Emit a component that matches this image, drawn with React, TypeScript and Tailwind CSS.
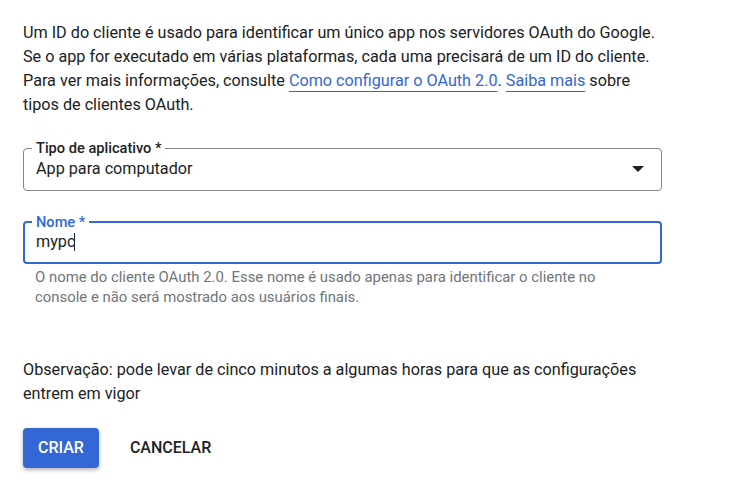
const FONT = { fontFamily: "Roboto, 'Noto Sans', Arial, sans-serif" };

function Link({ children }: { children: React.ReactNode }) {
  return (
    <a
      href="#"
      className="text-[#3367d6] underline decoration-[#3367d6] underline-offset-[5px]"
    >
      {children}
    </a>
  );
}

export default function App() {
  return (
    <div className="min-h-screen bg-white text-[#202124]" style={FONT}>
      <div className="w-[639px] ml-[23px] pt-[21px]">
        <p className="text-[16.2px] leading-6">
          Um ID do cliente é usado para identificar um único app nos servidores OAuth do Google.
          Se o app for executado em várias plataformas, cada uma precisará de um ID do cliente.
          Para ver mais informações, consulte <Link>Como configurar o OAuth 2.0</Link>.{" "}
          <Link>Saiba mais</Link> sobre tipos de clientes OAuth.
        </p>

        {/* tipo de aplicativo — select outlined */}
        <fieldset className="mt-[23px] border border-[#80868b] rounded pl-3 pr-[17px] pt-px pb-[9px]">
          <legend className="-ml-1 px-1 text-[14.6px] leading-4 font-medium text-[#202124]">
            Tipo de aplicativo *
          </legend>
          <div className="flex items-center justify-between h-6">
            <span className="text-[16.2px] leading-6">App para computador</span>
            <svg width="12" height="6" viewBox="0 0 12 6">
              <path d="M0 0h12L6 6z" fill="#202124" />
            </svg>
          </div>
        </fieldset>

        {/* nome — focado */}
        <fieldset className="mt-[23px] border-2 border-[#3367d6] rounded pl-[11px] pr-3 pt-0 pb-2">
          <legend className="-ml-1 px-1 text-[14.6px] leading-4 font-medium text-[#3367d6]">
            Nome *
          </legend>
          <div className="flex items-center h-6 text-[16.2px] leading-6">
            <span>mypc</span>
            <span className="inline-block w-px h-[18px] bg-[#1f2a44] -ml-px" />
          </div>
        </fieldset>
        <p className="mt-[3px] pl-3 pr-6 text-[14.9px] leading-5 text-[#70757a]">
          O nome do cliente OAuth 2.0. Esse nome é usado apenas para identificar o cliente no
          console e não será mostrado aos usuários finais.
        </p>

        <p className="mt-[51px] text-[16.2px] leading-6">
          Observação: pode levar de cinco minutos a algumas horas para que as configurações
          entrem em vigor
        </p>

        <div className="mt-[22px] flex items-center gap-4">
          <button
            type="button"
            className="h-10 px-[15px] rounded bg-[#3367d6] text-white text-[16px] font-medium shadow-[0_2px_4px_rgba(0,0,0,0.3)]"
          >
            CRIAR
          </button>
          <button
            type="button"
            className="h-10 px-[15px] rounded text-[#202124] text-[16px] font-medium"
          >
            CANCELAR
          </button>
        </div>
      </div>
    </div>
  );
}
